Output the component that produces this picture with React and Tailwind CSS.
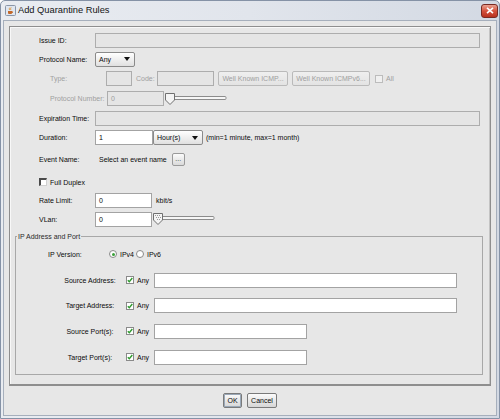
import React from "react";

const F = "font-['Liberation_Sans',Arial,sans-serif]";

function Box({ w, white, children, className = "" }) {
  return (
    <div
      className={`h-[15px] ${w} shrink-0 border flex items-center pl-[3px] ${
        white ? "bg-white border-[#a3a3a3] text-[#0a0a0a]" : "bg-[#e5e5e5] border-[#adadad] text-[#9c9c9c]"
      } ${className}`}
    >
      {children}
    </div>
  );
}

function Select({ w, children }) {
  return (
    <div
      className={`h-[15px] ${w} shrink-0 border border-[#8a8a8a] rounded-[2px] bg-gradient-to-b from-[#ffffff] to-[#e0e0e0] flex items-center justify-between pl-[3px] pr-[4px] text-[#0a0a0a]`}
    >
      <span>{children}</span>
      <svg width="6" height="4" viewBox="0 0 6 4">
        <path d="M0 0H6L3 4Z" fill="#111" />
      </svg>
    </div>
  );
}

function Btn({ w, dis, focus, children }) {
  return (
    <div
      className={`h-[15px] ${w} shrink-0 rounded-[2px] border flex items-center justify-center bg-gradient-to-b ${
        dis
          ? "border-[#bababa] from-[#efefef] to-[#e3e3e3] text-[#a0a0a0]"
          : "border-[#7a7a7a] from-[#fbfbfb] to-[#d6d6d6] text-[#0a0a0a]"
      } ${focus ? "shadow-[inset_0_0_0_1px_#9aa8b8]" : ""}`}
    >
      {children}
    </div>
  );
}

function Check({ checked, dis, sunken }) {
  if (sunken) {
    return (
      <div className="w-[8px] h-[8px] shrink-0 bg-white border-t-2 border-l-2 border-r border-b border-t-[#4a4a4a] border-l-[#4a4a4a] border-r-[#d0d0d0] border-b-[#d0d0d0]" />
    );
  }
  return (
    <div
      className={`w-[8px] h-[8px] shrink-0 border flex items-center justify-center ${
        dis ? "border-[#bcbcbc] bg-[#f0f0f0]" : "border-[#8a8a8a] bg-white"
      }`}
    >
      {checked && (
        <svg width="6" height="6" viewBox="0 0 6 6">
          <path d="M0.8 3.2L2.3 4.7L5.3 1" stroke="#2f9a2f" strokeWidth="1.4" fill="none" />
        </svg>
      )}
    </div>
  );
}

function Radio({ on }) {
  return (
    <div className="w-[8px] h-[8px] shrink-0 rounded-full border border-[#8a8a8a] bg-white flex items-center justify-center">
      {on && <div className="w-[3px] h-[3px] rounded-full bg-[#3aa03a]" />}
    </div>
  );
}

function Slider({ w, focus }) {
  return (
    <svg width={w} height="14" viewBox={`0 0 ${w} 14`} className="shrink-0">
      <rect x="3" y="4.5" width={w - 4} height="3" rx="1" fill="#f6f6f6" stroke="#8c8c8c" strokeWidth="1" />
      <path d="M1.5 1.5H10.5V8L6 12.5L1.5 8Z" fill="#f4f4f4" stroke="#707070" strokeWidth="1" />
      {focus && (
        <g fill="#9a9a9a">
          <rect x="3" y="3" width="1" height="1" />
          <rect x="5" y="3" width="1" height="1" />
          <rect x="7" y="3" width="1" height="1" />
          <rect x="4" y="5" width="1" height="1" />
          <rect x="6" y="5" width="1" height="1" />
          <rect x="8" y="5" width="1" height="1" />
          <rect x="5" y="7" width="1" height="1" />
          <rect x="7" y="7" width="1" height="1" />
        </g>
      )}
    </svg>
  );
}

function Label({ w, dis, children }) {
  return (
    <span className={`${w} shrink-0 ${dis ? "text-[#a0a0a0]" : "text-[#0a0a0a]"}`}>{children}</span>
  );
}

function JavaIcon() {
  return (
    <svg width="11" height="11" viewBox="0 0 11 11">
      <rect x="0.5" y="0.5" width="10" height="10" rx="1" fill="#dfe6f0" stroke="#8a96a8" />
      <path d="M3 6H7V8.5Q5 9.6 3 8.5Z" fill="#c2682a" />
      <path d="M7 6.5Q8.6 6.6 7.2 8" stroke="#c2682a" strokeWidth="0.8" fill="none" />
      <path d="M4.5 5Q3.8 3.8 4.8 2.6M5.8 5Q5.2 3.6 6.2 2.4" stroke="#e0902a" strokeWidth="0.8" fill="none" />
    </svg>
  );
}

export default function App() {
  return (
    <div className={`w-[500px] h-[419px] ${F} text-[7px] leading-none bg-white`}>
      <div className="w-[500px] h-[419px] flex flex-col rounded-t-[5px] border border-[#8592a6] bg-gradient-to-r from-[#e9ecf1] via-[#e1e5ec] to-[#d3d9e3]">
        {/* Title bar */}
        <div className="h-[19px] shrink-0 flex items-center pl-[4px] pr-[1px]">
          <JavaIcon />
          <span className="ml-[2px] text-[9.3px] text-[#141414] flex-1">Add Quarantine Rules</span>
          <div className="w-[17px] h-[14px] rounded-[3px] border border-[#7a2a22] bg-gradient-to-b from-[#e8a090] via-[#d4503c] to-[#b8301e] flex items-center justify-center">
            <svg width="8" height="7" viewBox="0 0 8 7">
              <path d="M1 0.8L7 6.2M7 0.8L1 6.2" stroke="#fff" strokeWidth="1.6" />
            </svg>
          </div>
        </div>
        {/* Content */}
        <div className="flex-1 mx-[2px] mb-[2px] border border-[#a6afbc] bg-[#e7e7e7] flex flex-col">
          {/* Panel */}
          <div className="mx-[5px] mt-[5px] h-[360px] border border-[#8e8e8e] border-b-2 shadow-[inset_1px_1px_0_#f8f8f8,inset_-1px_0_0_#c4c4c4] flex flex-col pt-[3px]">
            <div className="h-[20px] flex items-center pl-[29px]">
              <Label w="w-[56px]">Issue ID:</Label>
              <Box w="w-[385px]" />
            </div>
            <div className="h-[18px] flex items-center pl-[29px]">
              <Label w="w-[56px]">Protocol Name:</Label>
              <Select w="w-[40px]">Any</Select>
            </div>
            <div className="h-[21px] flex items-center pl-[40px]">
              <Label w="w-[56px]" dis>Type:</Label>
              <Box w="w-[26px]" />
              <span className="ml-[4px] w-[21px] text-[#a0a0a0]">Code:</span>
              <Box w="w-[57px]" />
              <div className="ml-[4px]">
                <Btn w="w-[70px]" dis>Well Known ICMP...</Btn>
              </div>
              <div className="ml-[4px]">
                <Btn w="w-[78px]" dis>Well Known ICMPv6...</Btn>
              </div>
              <div className="ml-[5px]">
                <Check dis />
              </div>
              <span className="ml-[3px] text-[#a0a0a0]">All</span>
            </div>
            <div className="h-[19px] flex items-center pl-[40px]">
              <Label w="w-[57px]" dis>Protocol Number:</Label>
              <Box w="w-[57px]">0</Box>
              <Slider w={63} />
            </div>
            <div className="h-[20px] flex items-center pl-[29px]">
              <Label w="w-[56px]">Expiration Time:</Label>
              <Box w="w-[385px]" />
            </div>
            <div className="h-[19px] flex items-center pl-[29px]">
              <Label w="w-[56px]">Duration:</Label>
              <Box w="w-[58px]" white>1</Box>
              <Select w="w-[50px]">Hour(s)</Select>
              <span className="ml-[3px] text-[#0a0a0a]">(min=1 minute, max=1 month)</span>
            </div>
            <div className="h-[25px] flex items-center pl-[29px]">
              <Label w="w-[60px]">Event Name:</Label>
              <span className="text-[#0a0a0a]">Select an event name</span>
              <div className="ml-[5px] w-[13px] h-[13px] rounded-[2px] border border-[#9a9a9a] bg-gradient-to-b from-[#fbfbfb] to-[#dadada] flex items-center justify-center text-[#333] pb-[2px]">
                ...
              </div>
            </div>
            <div className="h-[20px] flex items-center pl-[29px]">
              <Check sunken />
              <span className="ml-[3px] text-[#0a0a0a]">Full Duplex</span>
            </div>
            <div className="h-[17px] flex items-center pl-[29px]">
              <Label w="w-[56px]">Rate Limit:</Label>
              <Box w="w-[57px]" white>0</Box>
              <span className="ml-[4px] text-[#0a0a0a]">kbit/s</span>
            </div>
            <div className="h-[20px] flex items-center pl-[29px]">
              <Label w="w-[56px]">VLan:</Label>
              <Box w="w-[57px]" white>0</Box>
              <Slider w={63} focus />
            </div>
            {/* Fieldset */}
            <div className="relative ml-[5px] mr-[7px] mt-[7px] border border-[#a8a8a8] flex flex-col pt-[4px] pb-[4px]">
              <span className="absolute left-[1px] -top-[4px] px-[1px] bg-[#e7e7e7] text-[#2a2a2a]">IP Address and Port</span>
              <div className="h-[26px] flex items-center pl-[32px]">
                <Label w="w-[61px]">IP Version:</Label>
                <Radio on />
                <span className="ml-[3px] w-[16px] text-[#0a0a0a]">IPv4</span>
                <Radio />
                <span className="ml-[3px] text-[#0a0a0a]">IPv6</span>
              </div>
              {[
                ["Source Address:", "w-[303px]", "h-[26px]"],
                ["Target Address:", "w-[303px]", "h-[25px]"],
                ["Source Port(s):", "w-[153px]", "h-[26px]"],
                ["Target Port(s):", "w-[153px]", "h-[26px]"],
              ].map(([l, w, h]) => (
                <div key={l} className={`${h} flex items-center pl-[39px]`}>
                  <span className="w-[70px] text-center text-[#0a0a0a]">{l}</span>
                  <div className="ml-[1px]">
                    <Check checked />
                  </div>
                  <span className="ml-[3px] w-[17px] text-[#0a0a0a]">Any</span>
                  <Box w={w} white />
                </div>
              ))}
            </div>
          </div>
          {/* Buttons */}
          <div className="flex-1 flex items-center justify-center gap-[5px] pb-[1px]">
            <Btn w="w-[19px]" focus>OK</Btn>
            <Btn w="w-[30px]">Cancel</Btn>
          </div>
        </div>
      </div>
    </div>
  );
}
